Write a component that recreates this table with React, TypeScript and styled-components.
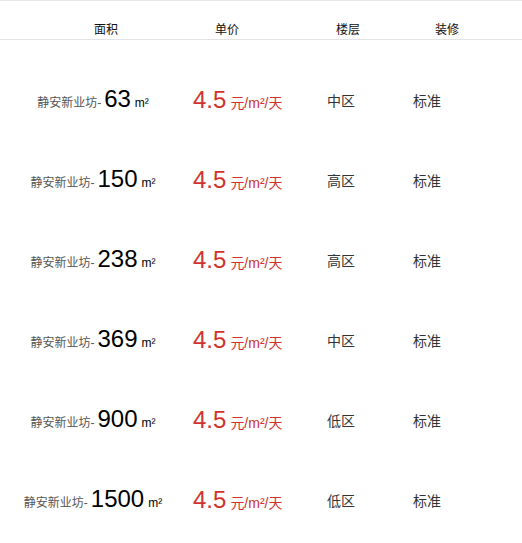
import React from "react";
import styled, { createGlobalStyle } from "styled-components";

const Global = createGlobalStyle`
  html, body { margin: 0; padding: 0; background: #fff; }
  body { font-family: "Liberation Sans", Arial, "Noto Sans CJK SC", sans-serif; }
`;

const Page = styled.div`
  width: 522px;
  border-top: 1px solid #e6e6e6;
`;

const Header = styled.div`
  display: grid;
  grid-template-columns: 121px 121px 99px 1fr;
  padding: 21px 0 0 94px;
  line-height: 17px;
  font-size: 12px;
  color: #111;
  border-bottom: 1px solid #e3e3e3;
`;

const Body = styled.div`
  padding-top: 21px;
`;

const Row = styled.div`
  display: grid;
  grid-template-columns: 186px 141px 86px 1fr;
  align-items: center;
  height: 80px;
  line-height: 28px;
`;

const AreaCell = styled.div`
  text-align: center;
  white-space: nowrap;
`;

const Name = styled.span`
  font-size: 12px;
  color: #555;
`;

const BigNum = styled.span<{ $price?: boolean }>`
  font-size: 24px;
  color: ${(p) => (p.$price ? "#d2322d" : "#000")};
  margin: ${(p) => (p.$price ? "0 4px 0 0" : "0 4px 0 3px")};
`;

const Unit = styled.span<{ $price?: boolean }>`
  font-size: ${(p) => (p.$price ? 14 : 12)}px;
  color: ${(p) => (p.$price ? "#d2322d" : "#000")};
`;

const PriceCell = styled.div`
  padding-left: 7px;
  white-space: nowrap;
`;

const TextCell = styled.div`
  font-size: 14px;
  color: #333;
`;

const rows = [
  { area: "63", floor: "中区" },
  { area: "150", floor: "高区" },
  { area: "238", floor: "高区" },
  { area: "369", floor: "中区" },
  { area: "900", floor: "低区" },
  { area: "1500", floor: "低区" },
];

export default function App() {
  return (
    <Page>
      <Global />
      <Header>
        <span>面积</span>
        <span>单价</span>
        <span>楼层</span>
        <span>装修</span>
      </Header>
      <Body>
        {rows.map((r, i) => (
          <Row key={i}>
            <AreaCell>
              <Name>静安新业坊-</Name>
              <BigNum>{r.area}</BigNum>
              <Unit>m²</Unit>
            </AreaCell>
            <PriceCell>
              <BigNum $price>4.5</BigNum>
              <Unit $price>元/m²/天</Unit>
            </PriceCell>
            <TextCell>{r.floor}</TextCell>
            <TextCell>标准</TextCell>
          </Row>
        ))}
      </Body>
    </Page>
  );
}
